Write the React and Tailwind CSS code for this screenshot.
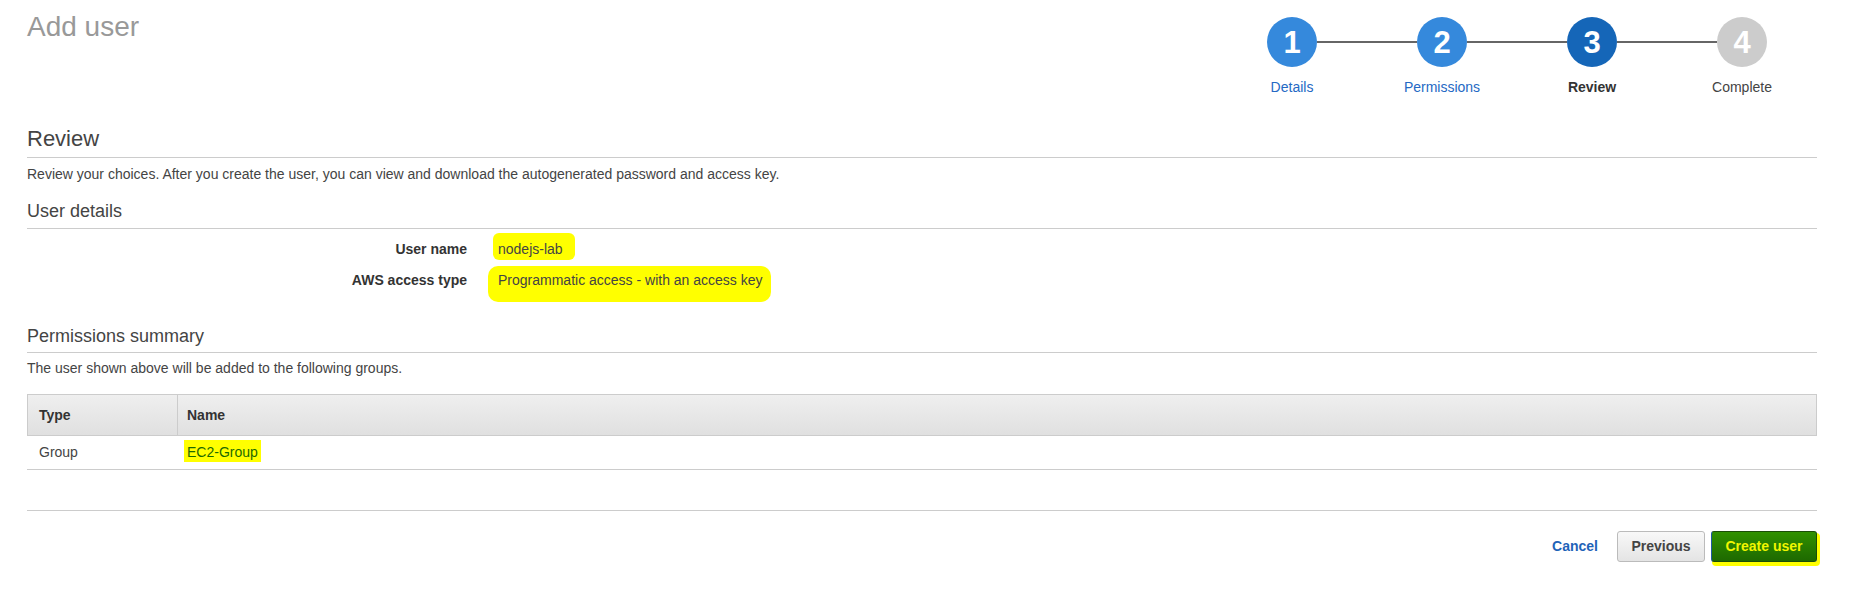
const steps = [
  { n: "1", label: "Details", circle: "bg-[#3589dc]", text: "text-[#2469c4]" },
  { n: "2", label: "Permissions", circle: "bg-[#3589dc]", text: "text-[#2469c4]" },
  { n: "3", label: "Review", circle: "bg-[#1566b8]", text: "text-[#333] font-bold" },
  { n: "4", label: "Complete", circle: "bg-[#cccccc]", text: "text-[#444]" },
]

const Stepper = () => (
  <div className="w-[600px] pt-[17px]">
    <div className="flex items-center px-[50px]">
      {steps.map((s, i) => (
        <div key={s.n} className="flex items-center">
          <div
            className={`w-[50px] h-[50px] rounded-full flex items-center justify-center text-white font-bold text-[31px] leading-none ${s.circle}`}
          >
            {s.n}
          </div>
          {i < steps.length - 1 && <div className="w-[100px] h-[2px] bg-[#666]" />}
        </div>
      ))}
    </div>
    <div className="grid grid-cols-4 mt-[12px]">
      {steps.map((s) => (
        <div key={s.n} className={`text-center text-[14px] leading-[16px] ${s.text}`}>
          {s.label}
        </div>
      ))}
    </div>
  </div>
)

const SectionTitle = ({ children, className = "" }) => (
  <div className={`text-[18px] leading-[22px] text-[#444] pb-[5px] border-b border-[#cccccc] ${className}`}>
    {children}
  </div>
)

export default function App() {
  return (
    <div className="w-[1858px] h-[614px] bg-white pl-[27px] pr-[41px] font-['Liberation_Sans',Arial,sans-serif] text-[#444]">
      <div className="flex justify-between items-start">
        <h1 className="pt-[11px] text-[28px] leading-[32px] text-[#999]">Add user</h1>
        <Stepper />
      </div>

      <div className="mt-[31px] text-[22px] leading-[26px] text-[#444] pb-[5px] border-b border-[#cccccc]">Review</div>
      <p className="mt-[6px] text-[14px] leading-[20px]">
        Review your choices. After you create the user, you can view and download the autogenerated password and access
        key.
      </p>

      <SectionTitle className="mt-[16px] pb-[6px]">User details</SectionTitle>
      <div className="mt-[10px] flex flex-col gap-[11px] text-[14px] leading-[20px]">
        <div className="flex">
          <div className="w-[440px] text-right font-bold text-[#333]">User name</div>
          <div className="ml-[31px]">
            <span className="bg-[#ffff00] -ml-[5px] pl-[5px] pr-[12px] pt-[8px] pb-[3px] rounded-[6px]">nodejs-lab</span>
          </div>
        </div>
        <div className="flex">
          <div className="w-[440px] text-right font-bold text-[#333]">AWS access type</div>
          <div className="ml-[31px]">
            <span className="bg-[#ffff00] -ml-[10px] pl-[10px] pr-[8px] pt-[6px] pb-[14px] rounded-[10px]">
              Programmatic access - with an access key
            </span>
          </div>
        </div>
      </div>

      <SectionTitle className="mt-[35px]">Permissions summary</SectionTitle>
      <p className="mt-[5px] text-[14px] leading-[20px]">The user shown above will be added to the following groups.</p>

      <div className="mt-[16px] text-[14px]">
        <div className="flex h-[42px] items-center border border-[#cccccc] bg-linear-to-b from-[#efefef] to-[#e0e0e0] font-bold text-[#333]">
          <div className="w-[150px] h-full flex items-center pl-[11px] border-r border-[#cccccc]">Type</div>
          <div className="flex-1 pl-[9px]">Name</div>
        </div>
        <div className="flex h-[34px] items-center border-b border-[#cccccc]">
          <div className="w-[150px] pl-[12px]">Group</div>
          <div className="flex-1 pl-[10px]">
            <span className="bg-[#ffff00] text-[#1d6a00] -ml-[3px] px-[3px] pt-[4px] pb-[2px]">EC2-Group</span>
          </div>
        </div>
      </div>

      <div className="mt-[40px] border-t border-[#cccccc]" />

      <div className="mt-[20px] flex justify-end items-center text-[14px] font-bold">
        <span className="text-[#1f63b8] mr-[19px]">Cancel</span>
        <button className="w-[88px] h-[31px] rounded-[3px] border border-[#bbbbbb] bg-linear-to-b from-[#f8f8f8] to-[#e4e4e4] text-[#444]">
          Previous
        </button>
        <button className="ml-[6px] w-[106px] h-[31px] rounded-[3px] border border-[#1b4d08] border-l-[#1f5aa0] bg-linear-to-b from-[#309100] to-[#1e6900] text-[#f0f600] shadow-[2px_3px_0_1px_#ffff00]">
          Create user
        </button>
      </div>
    </div>
  )
}
